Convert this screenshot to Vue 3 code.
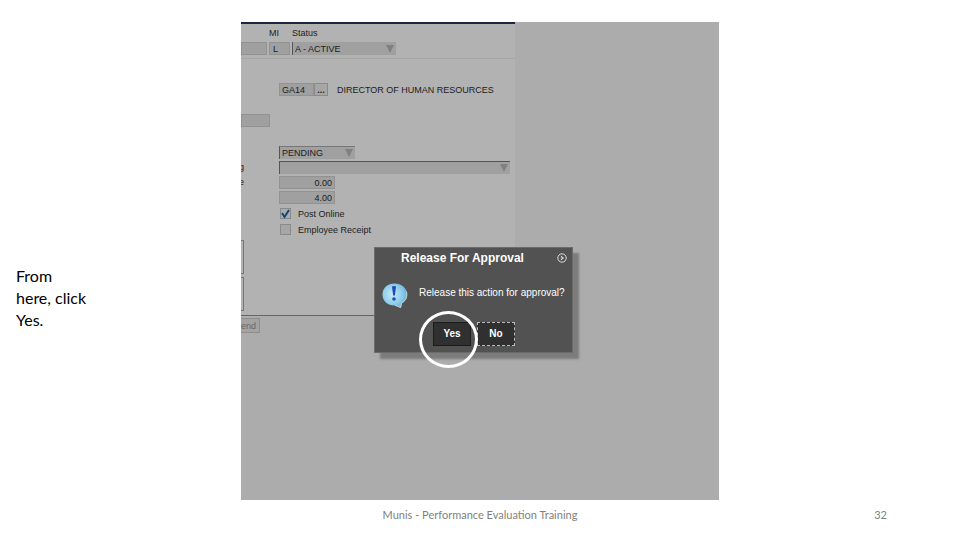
<template>
    <div class="slide">
        <p class="caption">From<br />here, click<br />Yes.</p>
        <main class="screen">
            <form class="form" @submit.prevent>
                <div class="head">
                    <input class="field last" aria-label="Last name" />
                    <div class="col">
                        <label for="mi">MI</label>
                        <input id="mi" class="field mi" v-model="form.mi" />
                    </div>
                    <div class="col">
                        <label for="status">Status</label>
                        <div class="select status">
                            <select id="status"><option>A - ACTIVE</option></select>
                            <svg viewBox="0 0 10 10"><path d="M1 1H9L5 9Z" /></svg>
                        </div>
                    </div>
                </div>

                <div class="row job">
                    <input class="field code" aria-label="Job code" v-model="form.code" />
                    <button type="button" class="more">...</button>
                    <span class="desc">DIRECTOR OF HUMAN RESOURCES</span>
                </div>

                <input class="field short" aria-label="Location" />

                <div class="grid">
                    <div class="select pending">
                        <select aria-label="Review status"><option>PENDING</option></select>
                        <svg viewBox="0 0 10 10"><path d="M1 1H9L5 9Z" /></svg>
                    </div>
                    <label class="cut" for="rating">g</label>
                    <div class="select rating">
                        <select id="rating"><option></option></select>
                        <svg viewBox="0 0 10 10"><path d="M1 1H9L5 9Z" /></svg>
                    </div>
                    <label class="cut" for="score">e</label>
                    <input id="score" class="field num" v-model="form.score" />
                    <input class="field num" aria-label="Maximum" v-model="form.max" />
                </div>

                <label v-for="c in checks" :key="c.text" class="check">
                    <span class="box">
                        <input type="checkbox" v-model="c.on" />
                        <svg v-if="c.on" viewBox="0 0 11 11"><path d="M2 5L4.5 9L9 2" /></svg>
                    </span>
                    {{ c.text }}
                </label>

                <div class="notes">
                    <textarea class="note" aria-label="Comment 1"></textarea>
                    <textarea class="note" aria-label="Comment 2"></textarea>
                </div>
            </form>
            <button type="button" class="send">end</button>

            <section class="dialog" role="dialog" aria-labelledby="dlg-title">
                <header class="title">
                    <h1 id="dlg-title">Release For Approval</h1>
                    <button type="button" class="close" aria-label="Close">
                        <svg viewBox="0 0 10 10">
                            <circle cx="5" cy="5" r="4.2" />
                            <path d="M3.8 3L6.4 5L3.8 7M3.8 5H6.4" />
                        </svg>
                    </button>
                </header>
                <div class="message">
                    <svg class="bubble" viewBox="0 0 26 26">
                        <defs>
                            <radialGradient id="blue" cx="0.4" cy="0.45" r="0.65">
                                <stop offset="0" stop-color="#c4ebfa" />
                                <stop offset="0.6" stop-color="#8fcdea" />
                                <stop offset="1" stop-color="#5faed6" />
                            </radialGradient>
                        </defs>
                        <path
                            d="M12.5 0.5C19.5 0.5 25 5 25 11.5C25 15.5 23 18.5 20 20.5L19 25L12.5 22.5C5.5 22.5 0.5 18 0.5 11.5C0.5 5 5.5 0.5 12.5 0.5Z"
                            fill="url(#blue)"
                        />
                        <path d="M24.5 8.5C26 15.5 22.5 18.5 19.5 20L18.5 24.5L13 22" fill="none" stroke="#c3d3da" />
                        <path d="M10 3.5Q12 2.5 14 3.5L12.9 12.5H11.1Z" fill="#1d49c4" />
                        <circle cx="12" cy="16" r="1.8" fill="#1d49c4" />
                    </svg>
                    <p>Release this action for approval?</p>
                </div>
                <div class="btn-container">
                    <button type="button" class="btn">Yes</button>
                    <button type="button" class="btn focused">No</button>
                </div>
                <span class="ring"></span>
            </section>
        </main>
        <footer class="footer">
            <span class="course">Munis - Performance Evaluation Training</span>
            <span class="page">32</span>
        </footer>
    </div>
</template>

<script setup>
import { reactive } from "vue";

const form = reactive({
    mi: "L",
    code: "GA14",
    score: "0.00",
    max: "4.00",
});

const checks = reactive([
    { text: "Post Online", on: true },
    { text: "Employee Receipt", on: false },
]);
</script>

<style>
body {
    margin: 0;
    background: #fff;
}
</style>

<style scoped>
* {
    box-sizing: border-box;
}

.slide {
    display: grid;
    grid-template-columns: 241fr 478fr 241fr;
    padding-top: 22px;
    font-family: Lato, sans-serif;
}

.caption {
    align-self: center;
    margin: 74px 0 0 16px;
    font-size: 16px;
    line-height: 22px;
    color: #000;
}

.screen {
    position: relative;
    grid-column: 2;
    aspect-ratio: 1;
    background: #acacac;
    font-family: "Liberation Sans", Arial, sans-serif;
    font-size: 9px;
    line-height: 12px;
    color: #1c1c1c;
}

.form {
    width: 274px;
    border-top: 2px solid #1b2740;
    border-bottom: 1px solid #666;
    background: #b2b2b2;
}

input,
select,
textarea,
button {
    margin: 0;
    padding: 0;
    border: 0;
    border-radius: 0;
    background: none;
    font: inherit;
    color: inherit;
    appearance: none;
}

.head {
    display: flex;
    align-items: flex-end;
    height: 35px;
    padding-bottom: 3px;
    border-bottom: 1px solid #a6a6a6;
}

.col {
    display: flex;
    flex-direction: column;
    gap: 3px;
}

.field {
    display: block;
    height: 13px;
    padding: 0 3px;
    border: 1px solid #929292;
    background: #a0a0a0;
    line-height: 11px;
}

.last {
    width: 26px;
    margin-right: 2px;
}

.mi {
    width: 21px;
    margin-right: 2px;
}

.select {
    display: grid;
    align-items: center;
    height: 13px;
    border-left: 1px solid #555;
    background: #a0a0a0;
}

.select select {
    grid-area: 1 / 1;
    width: 100%;
    height: 12px;
    padding-left: 2px;
}

.select svg {
    grid-area: 1 / 1;
    justify-self: end;
    width: 10px;
    height: 10px;
    margin-right: 1px;
    fill: #808080;
    pointer-events: none;
}

.status {
    width: 104px;
}

.row {
    display: flex;
    align-items: center;
}

.job {
    margin: 24px 0 0 38px;
}

.code {
    width: 35px;
    padding: 0 2px;
}

.more {
    width: 14px;
    height: 13px;
    border: 1px solid #8a8a8a;
    background: #a6a6a6;
    font-weight: bold;
    line-height: 10px;
}

.desc {
    margin-left: 9px;
}

.short {
    width: 29px;
    margin-top: 18px;
}

.grid {
    display: grid;
    grid-template-columns: 3px 1fr;
    gap: 2px 35px;
    margin-top: 19px;
}

.grid > :not(.cut) {
    grid-column: 2;
}

.cut {
    display: flex;
    justify-content: flex-end;
    overflow: hidden;
}

.pending {
    width: 76px;
    border-top: 1px solid #777;
}

.rating {
    margin-right: 5px;
    border-top: 1px solid #555;
}

.num {
    width: 56px;
    padding: 0 2px;
    text-align: right;
}

.check {
    display: flex;
    align-items: center;
    gap: 7px;
    height: 11px;
    margin: 4px 0 5px 39px;
}

.box {
    display: grid;
}

.box input {
    grid-area: 1 / 1;
    width: 11px;
    height: 11px;
    border: 1px solid #8a8a8a;
    background: #a6a6a6;
}

.box input:checked {
    background: #9fb0ba;
}

.box svg {
    grid-area: 1 / 1;
    width: 11px;
    height: 11px;
    fill: none;
    stroke: #1f4468;
    stroke-width: 2;
    pointer-events: none;
}

.notes {
    display: flex;
    flex-direction: column;
    gap: 3px;
    padding-bottom: 4px;
}

.note {
    width: 3px;
    height: 34px;
    border: 1px solid #777;
    border-left: 0;
    resize: none;
}

.send {
    width: 19px;
    height: 15px;
    margin-top: 2px;
    padding-right: 6px;
    border: 1px solid #8e8e8e;
    border-left: 0;
    background: #a3a3a3;
    color: #666;
    text-align: right;
    white-space: nowrap;
}

.dialog {
    position: absolute;
    left: 133px;
    top: 225px;
    width: 199px;
    height: 106px;
    border: 1px solid #6b6b6b;
    background: #525252;
    box-shadow: 6px 6px 2px #7c7c7c;
    color: #fff;
    font-size: 10px;
}

.title {
    display: flex;
    align-items: center;
    justify-content: space-between;
    padding: 2px 5px 0 26px;
}

.title h1 {
    margin: 0;
    font-size: 12px;
    line-height: 16px;
}

.close {
    width: 10px;
    height: 10px;
}

.close svg {
    display: block;
    fill: none;
    stroke: #ddd;
}

.message {
    display: flex;
    gap: 11px;
    padding: 17px 0 0 7px;
}

.bubble {
    width: 26px;
    height: 26px;
}

.message p {
    margin: 4px 0 0;
    white-space: nowrap;
}

.btn-container {
    display: flex;
    gap: 6px;
    margin: 13px 0 0 58px;
}

.btn {
    width: 38px;
    height: 24px;
    border: 1px solid #1c1c1c;
    background: #303030;
    font-weight: bold;
    cursor: pointer;
}

.focused {
    border: 1px dashed #bbb;
}

.ring {
    position: absolute;
    left: 44px;
    top: 63px;
    width: 59px;
    height: 57px;
    border: 3px solid #fff;
    border-radius: 50%;
    pointer-events: none;
}

.footer {
    display: grid;
    grid-column: 1 / -1;
    grid-template-columns: subgrid;
    padding-top: 7px;
    font-size: 11px;
    line-height: 16px;
    color: #7f7f7f;
}

.course {
    grid-column: 2;
    text-align: center;
}

.page {
    justify-self: end;
    margin-right: 73px;
}
</style>
